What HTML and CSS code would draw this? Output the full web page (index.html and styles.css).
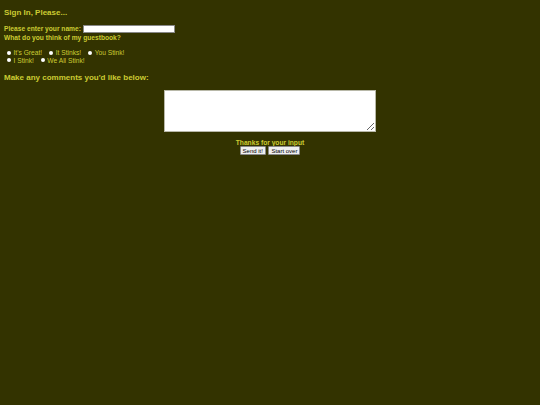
FILE: index.html
```html
<!DOCTYPE html>
<html>
<head>
<meta charset="utf-8">
<title>Guestbook</title>
<link rel="stylesheet" href="styles.css">
</head>
<body>
<form class="guestbook">
  <h3 class="title">Sign In, Please...</h3>
  <div class="name-row">
    <label class="label" for="name">Please enter your name:</label>
    <input class="name-input" id="name" type="text">
  </div>
  <div class="label">What do you think of my guestbook?</div>
  <div class="radios">
    <div class="radio-row">
      <label class="opt"><input class="radio" type="radio" name="rate"> It's Great!</label>
      <label class="opt"><input class="radio" type="radio" name="rate"> It Stinks!</label>
      <label class="opt"><input class="radio" type="radio" name="rate"> You Stink!</label>
    </div>
    <div class="radio-row">
      <label class="opt"><input class="radio" type="radio" name="rate"> I Stink!</label>
      <label class="opt"><input class="radio" type="radio" name="rate"> We All Stink!</label>
    </div>
  </div>
  <h3 class="title comments">Make any comments you'd like below:</h3>
  <div class="center">
    <textarea class="comment-box"></textarea>
    <div class="thanks">Thanks for your input</div>
    <div class="buttons">
      <button class="btn" type="button">Send it!</button>
      <button class="btn" type="reset">Start over</button>
    </div>
  </div>
</form>
</body>
</html>
```

FILE: styles.css
```css
html, body {
  background: #333300;
}
body {
  margin: 0;
  padding: 4px;
  color: #cccc33;
  font-family: "Liberation Sans", Arial, sans-serif;
  font-size: 6.67px;
}
.title {
  font-size: 8px;
  font-weight: bold;
  margin: 3.5px 0 8px;
  line-height: 9px;
}
.label {
  font-weight: bold;
  line-height: 8px;
}
.name-row {
  display: flex;
  align-items: center;
  gap: 2px;
  height: 9px;
}
.name-input {
  width: 92px;
  height: 8.5px;
  box-sizing: border-box;
  border: 0.5px solid #888;
  background: #fff;
  padding: 0;
  margin: 0;
  font-size: 6px;
}
.radios {
  margin-top: 7.5px;
  margin-bottom: 0;
}
.radio-row {
  display: flex;
  gap: 4px;
  line-height: 7.5px;
  height: 7.5px;
  align-items: center;
}
.opt {
  display: flex;
  align-items: center;
}
.radio {
  appearance: none;
  -webkit-appearance: none;
  width: 4px;
  height: 4px;
  border-radius: 50%;
  background: #fff;
  border: 0;
  margin: 0 2.5px 0 3px;
}
.comments {
  margin-top: 9px;
  margin-bottom: 8px;
}
.center {
  display: flex;
  flex-direction: column;
  align-items: center;
}
.comment-box {
  width: 212px;
  height: 41.5px;
  box-sizing: border-box;
  border: 1px solid #b8b8a8;
  background: #fff;
  margin: 0;
  padding: 1px;
  font-size: 6px;
}
.thanks {
  font-weight: bold;
  margin-top: 7.5px;
  line-height: 7px;
}
.buttons {
  display: flex;
  gap: 2.5px;
}
.btn {
  font-family: "Liberation Sans", Arial, sans-serif;
  font-size: 6px;
  color: #000;
  background: #efefef;
  border: 0.5px solid #888;
  border-radius: 1px;
  padding: 0 2px;
  height: 9px;
  line-height: 8px;
  margin: 0;
}
```
